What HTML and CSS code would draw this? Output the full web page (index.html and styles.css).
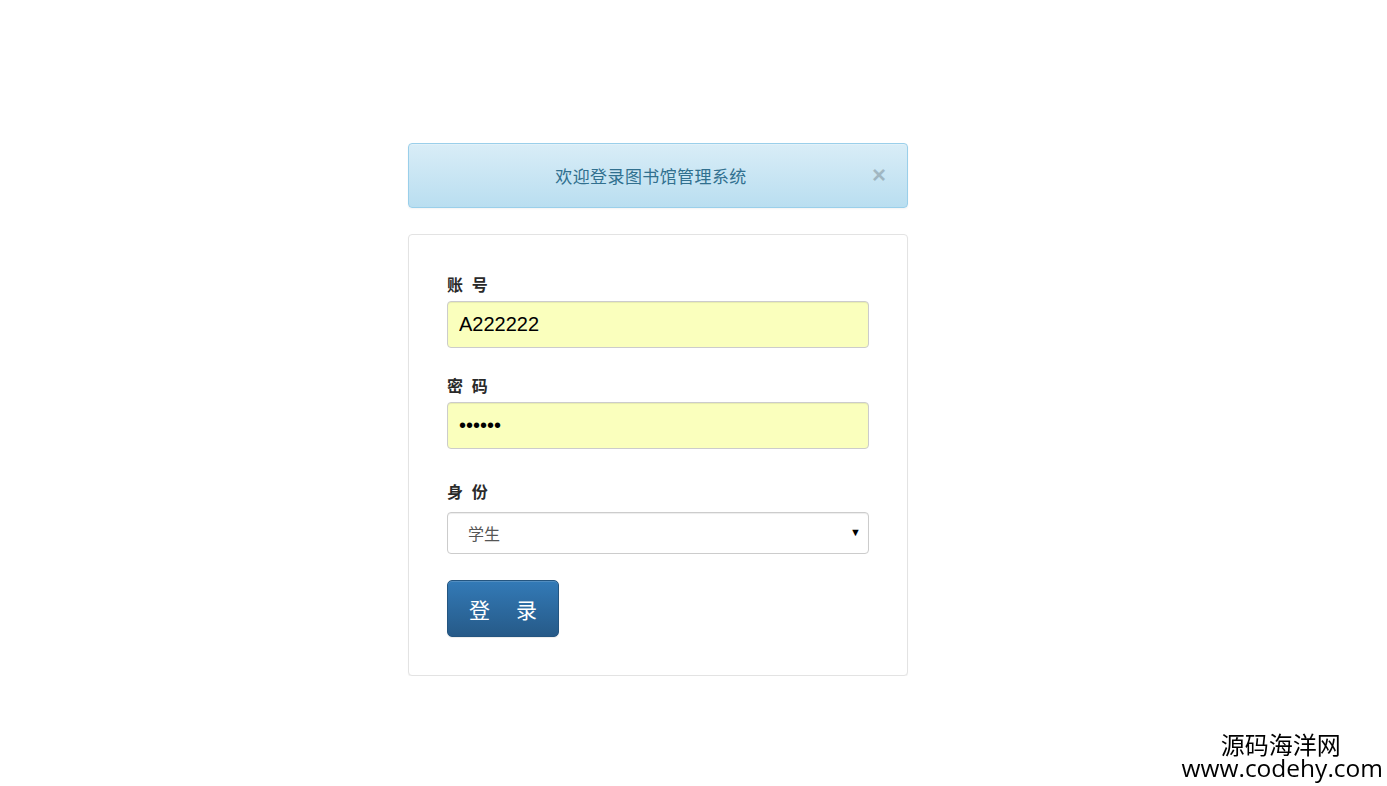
FILE: index.html
```html
<!DOCTYPE html>
<html lang="zh-CN">
<head>
<meta charset="utf-8">
<title>图书馆管理系统 - 登录</title>
<link rel="stylesheet" href="styles.css">
</head>
<body>
<div class="wrap">
  <div class="alert">
    <span class="alert-text">欢迎登录图书馆管理系统</span>
    <button class="close" type="button">&times;</button>
  </div>
  <form class="panel">
    <div class="group">
      <label class="lbl">账 号</label>
      <input class="field" type="text" value="A222222">
    </div>
    <div class="group">
      <label class="lbl">密 码</label>
      <input class="field" type="password" value="123456">
    </div>
    <div class="group group-select">
      <label class="lbl">身 份</label>
      <div class="select-wrap">
        <select class="select">
          <option>学生</option>
          <option>教师</option>
          <option>管理员</option>
        </select>
        <span class="caret">▼</span>
      </div>
    </div>
    <button class="btn" type="button"><span>登</span><span>录</span></button>
  </form>
</div>
<div class="watermark">
  <div class="wm-cn">源码海洋网</div>
  <div class="wm-en">www.codehy.com</div>
</div>
</body>
</html>
```

FILE: styles.css
```css
html, body {
  margin: 0;
  padding: 0;
  background: #fff;
}
body {
  font-family: "Liberation Sans", "Noto Sans CJK SC", sans-serif;
  color: #333;
}
.wrap {
  width: 500px;
  margin: 143px 0 0 408px;
}
.alert {
  position: relative;
  box-sizing: border-box;
  height: 65px;
  border: 1px solid #9acfea;
  border-radius: 4px;
  background: linear-gradient(to bottom, #d9edf7 0%, #b9def0 100%);
  box-shadow: inset 0 1px 0 rgba(255,255,255,.25), 0 1px 2px rgba(0,0,0,.05);
  padding: 0 29px 0 15px;
  display: flex;
  align-items: center;
  justify-content: center;
}
.alert-text {
  font-family: "Noto Sans CJK SC", sans-serif;
  font-size: 17px;
  letter-spacing: 0.4px;
  color: #31708f;
  line-height: 21px;
}
.close {
  position: absolute;
  right: 21px;
  top: 19px;
  border: 0;
  background: none;
  padding: 0;
  font-family: "Liberation Sans", sans-serif;
  font-size: 24px;
  font-weight: bold;
  line-height: 24px;
  color: #000;
  opacity: .2;
  cursor: pointer;
}
.panel {
  display: block;
  margin-top: 26px;
  border: 1px solid #e3e3e3;
  border-radius: 4px;
  box-shadow: 0 1px 1px rgba(0,0,0,.05);
  padding: 38px;
  background: #fff;
}
.group {
  display: flex;
  flex-direction: column;
  margin-bottom: 26px;
}
.group-select {
  padding-top: 5px;
}
.lbl {
  font-family: "Noto Sans CJK SC", sans-serif;
  font-size: 16px;
  font-weight: bold;
  letter-spacing: 2.5px;
  line-height: 22px;
  color: #2a2a2a;
  margin-bottom: 6px;
}
.group-select .lbl {
  margin-bottom: 10px;
}
.field {
  box-sizing: border-box;
  height: 47px;
  width: 100%;
  margin: 0;
  padding: 0 11px;
  border: 1px solid #ccc;
  border-radius: 4px;
  background: #faffbd;
  font-family: "Liberation Sans", sans-serif;
  font-size: 20px;
  color: #000;
  box-shadow: inset 0 1px 1px rgba(0,0,0,.075);
  outline: none;
}
.select-wrap {
  position: relative;
}
.select {
  box-sizing: border-box;
  width: 100%;
  height: 42px;
  margin: 0;
  padding: 0 20px;
  border: 1px solid #ccc;
  border-radius: 4px;
  background: #fff;
  -webkit-appearance: none;
  appearance: none;
  font-family: "Noto Sans CJK SC", sans-serif;
  font-size: 16px;
  color: #555;
  box-shadow: inset 0 1px 1px rgba(0,0,0,.075);
  outline: none;
}
.caret {
  position: absolute;
  right: 8px;
  top: 13px;
  font-size: 11px;
  line-height: 14px;
  color: #000;
  pointer-events: none;
}
.btn {
  box-sizing: border-box;
  width: 112px;
  height: 57px;
  margin: 0;
  padding: 0 0 0 21px;
  display: flex;
  align-items: center;
  gap: 26px;
  border: 1px solid #245580;
  border-radius: 5px;
  background: linear-gradient(to bottom, #337ab7 0%, #265a88 100%);
  box-shadow: inset 0 1px 0 rgba(255,255,255,.15), 0 1px 1px rgba(0,0,0,.075);
  color: #fff;
  font-family: "Noto Sans CJK SC", sans-serif;
  font-size: 21px;
  line-height: 24px;
  cursor: pointer;
}
.watermark {
  position: fixed;
  right: 4px;
  bottom: 7px;
  text-align: center;
  color: #000;
  font-family: "Noto Sans CJK SC", sans-serif;
}
.wm-cn {
  font-size: 24px;
  line-height: 27px;
  margin-right: 3px;
}
.wm-en {
  font-family: "Open Sans", "Noto Sans", sans-serif;
  font-size: 24.5px;
  line-height: 22px;
}
```
